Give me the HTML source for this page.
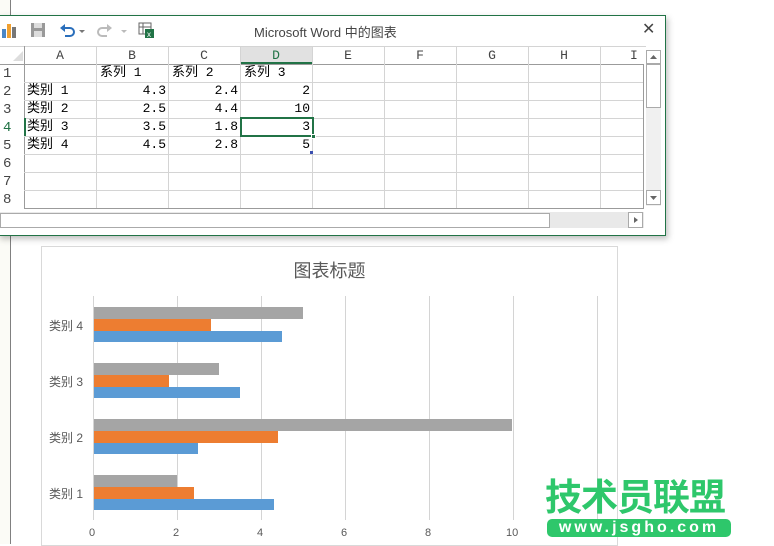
<!DOCTYPE html>
<html><head><meta charset="utf-8"><style>
*{margin:0;padding:0;box-sizing:border-box}
body{width:774px;height:544px;background:#fff;position:relative;overflow:hidden;font-family:"Liberation Sans","Noto Sans CJK SC",sans-serif}
.a{position:absolute}
.m{font-family:"Liberation Mono","Noto Sans CJK SC",monospace;font-size:13px;color:#000}
.hl{position:absolute;height:1px;background:#d4d4d4}
.vl{position:absolute;width:1px;background:#d4d4d4}
.cell{position:absolute;height:18px;line-height:18px}
</style></head><body>
<div class="a" style="left:0;top:0;width:10px;height:544px;background:#fbfbf6"></div>
<div class="a" style="left:10px;top:0;width:1px;height:544px;background:#808080"></div>
<!-- window -->
<div class="a" style="left:-2px;top:15px;width:668px;height:221px;border:1px solid #217346;background:#fff;box-shadow:2px 3px 6px rgba(0,0,0,.25)"></div>
<svg class="a" style="left:0;top:20px" width="170" height="22">
<rect x="2" y="9" width="4" height="9" fill="#4a86c5"/><rect x="7" y="4" width="4" height="14" fill="#f0a030"/><rect x="12" y="7" width="4" height="11" fill="#777"/>
<rect x="31" y="3" width="14" height="14" fill="#999"/><rect x="34" y="3" width="8" height="5" fill="#ddd"/><rect x="34" y="11" width="8" height="6" fill="#ddd"/>
<path d="M62 8 h8 a4 4 0 0 1 0 8 h-5" stroke="#2a6ebb" stroke-width="2" fill="none"/><path d="M60 8 l5 -4 v8z" fill="#2a6ebb"/>
<path d="M79 10 l3 3 l3 -3z" fill="#777"/>
<path d="M110 8 h-8 a4 4 0 0 0 0 8 h5" stroke="#bbb" stroke-width="2" fill="none"/><path d="M112 8 l-5 -4 v8z" fill="#bbb"/>
<path d="M121 10 l3 3 l3 -3z" fill="#bbb"/>
<rect x="139" y="3" width="12" height="11" fill="none" stroke="#666"/><line x1="139" y1="7" x2="151" y2="7" stroke="#666"/><line x1="143" y1="3" x2="143" y2="14" stroke="#666"/>
<rect x="145" y="9" width="9" height="9" fill="#217346"/><text x="147" y="17" font-size="8" fill="#fff" font-family="Liberation Sans">x</text>
</svg>
<div class="a" style="left:254px;top:22px;font-size:13px;color:#444">Microsoft Word 中的图表</div>
<div class="a" style="left:642px;top:19px;font-size:16px;color:#444">✕</div>
<div class="a" style="left:0;top:46px;width:646px;height:1px;background:#d4d4d4"></div>
<div class="a" style="left:241px;top:47px;width:72px;height:17px;background:#e1e1e1;border-bottom:2px solid #217346"></div>
<svg class="a" style="left:12px;top:50px" width="12" height="12"><path d="M11 1 V11 H1z" fill="#ddd"/></svg>
<div class="a" style="left:0;top:64px;width:643px;height:1px;background:#9b9b9b"></div>
<div class="a" style="left:24px;top:46px;width:1px;height:162px;background:#9b9b9b"></div>
<div class="a" style="left:24px;top:208px;width:619px;height:1px;background:#9b9b9b"></div>
<div class="a" style="left:643px;top:64px;width:1px;height:145px;background:#9b9b9b"></div>
<div class="hl" style="left:24px;top:82px;width:619px"></div>
<div class="hl" style="left:24px;top:100px;width:619px"></div>
<div class="hl" style="left:24px;top:118px;width:619px"></div>
<div class="hl" style="left:24px;top:136px;width:619px"></div>
<div class="hl" style="left:24px;top:154px;width:619px"></div>
<div class="hl" style="left:24px;top:172px;width:619px"></div>
<div class="hl" style="left:24px;top:190px;width:619px"></div>
<div class="vl" style="left:96px;top:46px;height:162px"></div>
<div class="vl" style="left:168px;top:46px;height:162px"></div>
<div class="vl" style="left:240px;top:46px;height:162px"></div>
<div class="vl" style="left:312px;top:46px;height:162px"></div>
<div class="vl" style="left:384px;top:46px;height:162px"></div>
<div class="vl" style="left:456px;top:46px;height:162px"></div>
<div class="vl" style="left:528px;top:46px;height:162px"></div>
<div class="vl" style="left:600px;top:46px;height:162px"></div>
<div class="a" style="left:24px;top:118px;width:2px;height:18px;background:#217346"></div>
<div class="cell m" style="left:24px;top:47px;width:72px;text-align:center;color:#444">A</div>
<div class="cell m" style="left:96px;top:47px;width:72px;text-align:center;color:#444">B</div>
<div class="cell m" style="left:168px;top:47px;width:72px;text-align:center;color:#444">C</div>
<div class="cell m" style="left:240px;top:47px;width:72px;text-align:center;color:#217346">D</div>
<div class="cell m" style="left:312px;top:47px;width:72px;text-align:center;color:#444">E</div>
<div class="cell m" style="left:384px;top:47px;width:72px;text-align:center;color:#444">F</div>
<div class="cell m" style="left:456px;top:47px;width:72px;text-align:center;color:#444">G</div>
<div class="cell m" style="left:528px;top:47px;width:72px;text-align:center;color:#444">H</div>
<div class="cell m" style="left:630px;top:47px;color:#444">I</div>
<div class="cell m" style="left:3px;top:65px;color:#444;font-size:14px">1</div>
<div class="cell m" style="left:3px;top:83px;color:#444;font-size:14px">2</div>
<div class="cell m" style="left:3px;top:101px;color:#444;font-size:14px">3</div>
<div class="cell m" style="left:3px;top:119px;color:#217346;font-size:14px">4</div>
<div class="cell m" style="left:3px;top:137px;color:#444;font-size:14px">5</div>
<div class="cell m" style="left:3px;top:155px;color:#444;font-size:14px">6</div>
<div class="cell m" style="left:3px;top:173px;color:#444;font-size:14px">7</div>
<div class="cell m" style="left:3px;top:191px;color:#444;font-size:14px">8</div>
<div class="cell m" style="left:100px;top:64px">系列 1</div>
<div class="cell m" style="left:172px;top:64px">系列 2</div>
<div class="cell m" style="left:244px;top:64px">系列 3</div>
<div class="cell m" style="left:27px;top:82px">类别 1</div>
<div class="cell m" style="left:27px;top:100px">类别 2</div>
<div class="cell m" style="left:27px;top:118px">类别 3</div>
<div class="cell m" style="left:27px;top:136px">类别 4</div>
<div class="cell m" style="left:96px;top:82px;width:70px;text-align:right">4.3</div>
<div class="cell m" style="left:96px;top:100px;width:70px;text-align:right">2.5</div>
<div class="cell m" style="left:96px;top:118px;width:70px;text-align:right">3.5</div>
<div class="cell m" style="left:96px;top:136px;width:70px;text-align:right">4.5</div>
<div class="cell m" style="left:168px;top:82px;width:70px;text-align:right">2.4</div>
<div class="cell m" style="left:168px;top:100px;width:70px;text-align:right">4.4</div>
<div class="cell m" style="left:168px;top:118px;width:70px;text-align:right">1.8</div>
<div class="cell m" style="left:168px;top:136px;width:70px;text-align:right">2.8</div>
<div class="cell m" style="left:240px;top:82px;width:70px;text-align:right">2</div>
<div class="cell m" style="left:240px;top:100px;width:70px;text-align:right">10</div>
<div class="cell m" style="left:240px;top:118px;width:70px;text-align:right">3</div>
<div class="cell m" style="left:240px;top:136px;width:70px;text-align:right">5</div>
<div class="a" style="left:240px;top:117px;width:74px;height:20px;border:2px solid #217346"></div>
<div class="a" style="left:311px;top:134px;width:5px;height:5px;background:#217346;border:1px solid #fff"></div>
<div class="a" style="left:310px;top:151px;width:3px;height:3px;background:#3b4fb0"></div>
<div class="a" style="left:646px;top:50px;width:15px;height:156px;background:#f0f0f0"></div>
<div class="a" style="left:646px;top:50px;width:15px;height:14px;background:#fff;border:1px solid #aaa"></div>
<svg class="a" style="left:648px;top:53px" width="11" height="8"><path d="M2 6 L5.5 2 L9 6z" fill="#666"/></svg>
<div class="a" style="left:646px;top:64px;width:15px;height:44px;background:#fff;border:1px solid #aaa"></div>
<div class="a" style="left:646px;top:190px;width:15px;height:15px;background:#fff;border:1px solid #aaa"></div>
<svg class="a" style="left:648px;top:194px" width="11" height="8"><path d="M2 2 L5.5 6 L9 2z" fill="#666"/></svg>
<div class="a" style="left:0;top:212px;width:644px;height:16px;background:#e9e9e9"></div>
<div class="a" style="left:0;top:213px;width:550px;height:15px;background:#fff;border:1px solid #aaa"></div>
<div class="a" style="left:628px;top:212px;width:15px;height:16px;background:#fff;border:1px solid #aaa"></div>
<svg class="a" style="left:631px;top:215px" width="9" height="10"><path d="M3 2 L7 5 L3 8z" fill="#666"/></svg>
<!-- chart -->
<div class="a" style="left:41px;top:246px;width:577px;height:300px;border:1px solid #d9d9d9;background:#fff"></div>
<div class="a" style="left:41px;top:257px;width:577px;text-align:center;font-size:18px;color:#595959">图表标题</div>
<div class="vl" style="left:93px;top:296px;height:224px"></div>
<div class="vl" style="left:177px;top:296px;height:224px"></div>
<div class="vl" style="left:261px;top:296px;height:224px"></div>
<div class="vl" style="left:345px;top:296px;height:224px"></div>
<div class="vl" style="left:429px;top:296px;height:224px"></div>
<div class="vl" style="left:513px;top:296px;height:224px"></div>
<div class="vl" style="left:597px;top:296px;height:224px"></div>
<div class="a" style="left:94px;top:307px;width:209px;height:12px;background:#a5a5a5"></div>
<div class="a" style="left:94px;top:319px;width:117px;height:12px;background:#ed7d31"></div>
<div class="a" style="left:94px;top:331px;width:188px;height:11px;background:#5b9bd5"></div>
<div class="a" style="left:94px;top:363px;width:125px;height:12px;background:#a5a5a5"></div>
<div class="a" style="left:94px;top:375px;width:75px;height:12px;background:#ed7d31"></div>
<div class="a" style="left:94px;top:387px;width:146px;height:11px;background:#5b9bd5"></div>
<div class="a" style="left:94px;top:419px;width:418px;height:12px;background:#a5a5a5"></div>
<div class="a" style="left:94px;top:431px;width:184px;height:12px;background:#ed7d31"></div>
<div class="a" style="left:94px;top:443px;width:104px;height:11px;background:#5b9bd5"></div>
<div class="a" style="left:94px;top:475px;width:83px;height:12px;background:#a5a5a5"></div>
<div class="a" style="left:94px;top:487px;width:100px;height:12px;background:#ed7d31"></div>
<div class="a" style="left:94px;top:499px;width:180px;height:11px;background:#5b9bd5"></div>
<div class="a" style="left:49px;top:317px;font-size:12px;color:#595959">类别 4</div>
<div class="a" style="left:49px;top:373px;font-size:12px;color:#595959">类别 3</div>
<div class="a" style="left:49px;top:429px;font-size:12px;color:#595959">类别 2</div>
<div class="a" style="left:49px;top:485px;font-size:12px;color:#595959">类别 1</div>
<div class="a" style="left:89px;top:527px;font-size:11px;color:#595959">0</div>
<div class="a" style="left:173px;top:527px;font-size:11px;color:#595959">2</div>
<div class="a" style="left:257px;top:527px;font-size:11px;color:#595959">4</div>
<div class="a" style="left:341px;top:527px;font-size:11px;color:#595959">6</div>
<div class="a" style="left:425px;top:527px;font-size:11px;color:#595959">8</div>
<div class="a" style="left:506px;top:527px;font-size:11px;color:#595959">10</div>
<div class="a" style="left:590px;top:527px;font-size:11px;color:#595959">12</div>
<!-- logo -->
<div class="a" style="left:545px;top:472px;font-size:37px;font-weight:bold;color:#2ec76b;letter-spacing:-1px;font-family:'Noto Sans CJK SC',sans-serif;line-height:44px">技术员联盟</div>
<div class="a" style="left:547px;top:519px;width:184px;height:18px;border-radius:5px;background:#2ec76b;color:#fff;font-size:16px;font-weight:bold;text-align:center;line-height:18px;letter-spacing:3px">www.jsgho.com</div>
</body></html>
